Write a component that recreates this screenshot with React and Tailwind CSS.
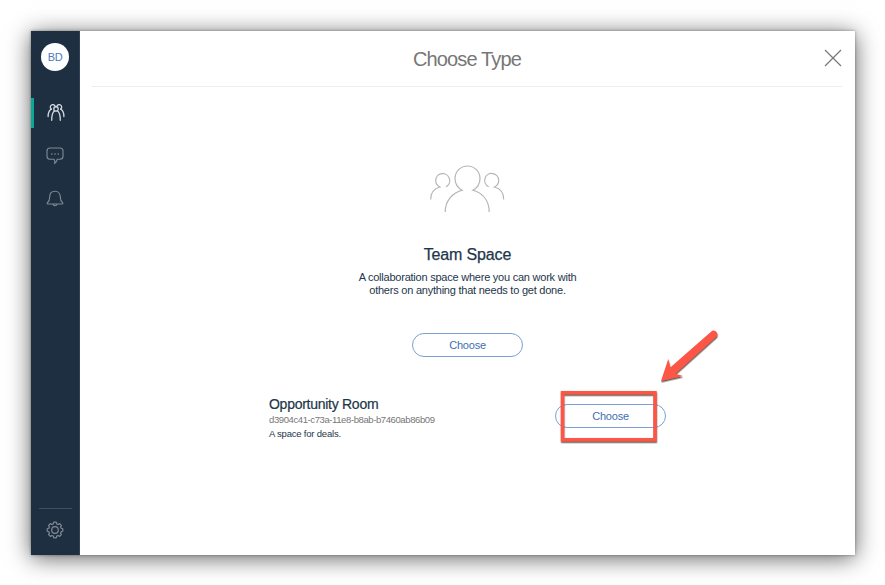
import React from "react";

function TeamIcon() {
  return (
    <svg width="18" height="18" viewBox="0 0 18 18" fill="none" stroke="#d3dade" strokeWidth="1.300" strokeLinecap="round">
      <path d="M4.300 5.100a2.500 2.500 0 1 1 4-2.300M13.700 5.100a2.500 2.500 0 1 0-4-2.300" />
      <path d="M4.300 5.100C1.900 6.400 1.100 8.800 1.100 12.500M13.700 5.100C16.100 6.400 16.900 8.800 16.900 12.500" />
      <circle cx="9" cy="4.900" r="2.200" />
      <path d="M7.600 6.700C5.400 8.300 4.700 11 4.700 16.300M10.400 6.700c2.200 1.600 2.900 4.300 2.900 9.600" />
    </svg>
  );
}

function ChatIcon() {
  return (
    <svg width="18" height="18" viewBox="0 0 18 18" fill="none" stroke="#7f8b94" strokeWidth="1.100">
      <path d="M4 1h10a3 3 0 0 1 3 3v5.200a3 3 0 0 1-3 3h-2.700c-.3 1.800-1.100 3-2.600 4 .3-1.500.2-2.700-.6-4H4a3 3 0 0 1-3-3V4a3 3 0 0 1 3-3Z" />
      <g fill="#8e989f" stroke="none">
        <circle cx="5.800" cy="6.900" r=".75" />
        <circle cx="9" cy="6.900" r=".75" />
        <circle cx="12.200" cy="6.900" r=".75" />
      </g>
    </svg>
  );
}

function BellIcon() {
  return (
    <svg width="18" height="18" viewBox="0 0 18 18" fill="none" stroke="#7f8b94" strokeWidth="1.100" strokeLinejoin="round">
      <path d="M9 1.200C5.400 1.200 3.700 4 3.700 7c0 3.200-.6 4.500-2.300 5.800-.6.500-.3 1.200.4 1.200h14.400c.7 0 1-.7.4-1.200-1.700-1.300-2.300-2.600-2.300-5.800 0-3-1.700-5.800-5.300-5.800Z" />
      <path d="M6.900 14.200a2.150 1.900 0 0 0 4.200 0" />
    </svg>
  );
}

function GearIcon() {
  const teeth = [];
  for (let i = 0; i < 8; i++) {
    [
      [-15.5, 6.4],
      [-9, 7.9],
      [9, 7.9],
      [15.5, 6.4],
    ].forEach(([offset, r]) => {
      const a = ((i * 45 + offset) * Math.PI) / 180;
      teeth.push(`${(9 + r * Math.sin(a)).toFixed(2)},${(9 - r * Math.cos(a)).toFixed(2)}`);
    });
  }
  return (
    <svg width="18" height="18" viewBox="0 0 18 18" fill="none" stroke="#7f8b94" strokeWidth="1.200" strokeLinejoin="round">
      <polygon points={teeth.join(" ")} />
      <circle cx="9" cy="9" r="3.300" />
    </svg>
  );
}

function Sidebar() {
  return (
    <aside className="flex w-[49px] shrink-0 flex-col items-center border-r border-[#304152] bg-[#1d2f40] pt-3">
      <div className="flex h-7 w-7 shrink-0 items-center justify-center rounded-full bg-white text-[11px] tracking-[-0.4px] text-[#5078bd]">
        BD
      </div>
      <div className="mt-[27px] flex h-[30px] w-full items-center justify-center border-l-[3px] border-[#08aa95] pr-[2px]">
        <TeamIcon />
      </div>
      <div className="mt-[19px] h-[18px]"><ChatIcon /></div>
      <div className="mt-[25px] h-[18px]"><BellIcon /></div>
      <div className="mt-auto flex h-[47px] w-[33px] justify-center border-t border-[#41505c] pt-[12px]">
        <GearIcon />
      </div>
    </aside>
  );
}

function ChooseButton() {
  return (
    <button className="flex h-6 w-[111px] items-center justify-center rounded-full border border-[#7ba0d7] bg-white text-[11px] tracking-[-0.2px] text-[#3d70b2]">
      Choose
    </button>
  );
}

function SpaceIllustration() {
  return (
    <svg className="mx-auto block" width="76" height="48" viewBox="0 0 76 48" fill="none" stroke="#b5b5b5" strokeWidth="1.200">
      <path d="M15.200 47C15.200 36 22 28.200 32.200 25.200 27 22.500 25 18 25 13.500a12.500 12.500 0 0 1 25 0c0 4.500-2 9-7.200 11.700C53 28.200 59.200 36 59.200 47" />
      <path d="M.7 34.500c0-6.500 3.500-11 9.300-12.500-3-1.400-4.300-3.900-4.300-6.500a7 7 0 1 1 10.300 6.300" />
      <path d="M73.700 34.500c0-6.500-3.500-11-9.300-12.500 3-1.400 4.300-3.900 4.300-6.500a7 7 0 1 0-10 6.300" />
    </svg>
  );
}

function Annotation() {
  return (
    <svg className="pointer-events-none absolute left-[540px] top-[320px]" width="190" height="135" viewBox="0 0 190 135">
      <defs>
        <filter id="mark-shadow" x="-10%" y="-10%" width="125%" height="130%">
          <feDropShadow dx="0.300" dy="1.500" stdDeviation="0.600" floodColor="#33201e" floodOpacity=".75" />
        </filter>
      </defs>
      <g filter="url(#mark-shadow)">
        <rect x="22.500" y="72.700" width="92.500" height="47" fill="none" stroke="#fc5647" strokeWidth="3.500" />
        <path d="M121 61 128.300 39l2.200 8.300L171 11.700a3.500 3.500 0 0 1 5.200 5.200L135.500 53.800l7.500 2.200Z" fill="#fc5647" />
      </g>
    </svg>
  );
}

export default function App() {
  return (
    <div className="relative h-[585px] w-[885px] overflow-hidden bg-white p-[31px] pb-[30px] pr-[30px] font-['Liberation_Sans',Arial,sans-serif]">
      <div className="flex h-[524px] w-[824px] bg-white shadow-[0_0_3px_rgba(0,0,0,0.35),0_3px_22px_rgba(0,0,0,0.62)]">
        <Sidebar />
        <main className="flex min-w-0 flex-1 flex-col">
          <header className="ml-3 mr-[13px] flex h-14 items-center border-b border-[#ededed]">
            <span className="w-[18px]" />
            <h1 className="flex-1 text-center text-[20px] tracking-[-0.87px] text-[#777]">Choose Type</h1>
            <svg className="relative -top-px" width="18" height="18" viewBox="0 0 18 18" stroke="#777" strokeWidth="1.200">
              <path d="M1 1l16 16M17 1L1 17" />
            </svg>
          </header>
          <section className="pt-[78px] text-center text-[#1d3649]">
            <SpaceIllustration />
            <h2 className="mt-[31px] text-[16px] leading-[22px] tracking-[-0.15px] [-webkit-text-stroke:0.25px]">Team Space</h2>
            <p className="mt-[5px] text-[11px] leading-[13px] tracking-[-0.23px]">
              A collaboration space where you can work with
              <br />
              others on anything that needs to get done.
            </p>
            <div className="mt-[36px] flex justify-center"><ChooseButton /></div>
          </section>
          <section className="ml-[189px] mt-[37px] flex w-[397px] items-start justify-between text-[#1d3649]">
            <div className="pt-[2px]">
              <h2 className="text-[14px] leading-[16px] tracking-[-0.27px] [-webkit-text-stroke:0.2px]">Opportunity Room</h2>
              <p className="mt-px text-[9.500px] leading-[14px] tracking-[-0.4px] text-[#777]">d3904c41-c73a-11e8-b8ab-b7460ab86b09</p>
              <p className="text-[9.500px] leading-[14px] tracking-[-0.2px]">A space for deals.</p>
            </div>
            <div className="pt-[10px]"><ChooseButton /></div>
          </section>
        </main>
      </div>
      <Annotation />
    </div>
  );
}
